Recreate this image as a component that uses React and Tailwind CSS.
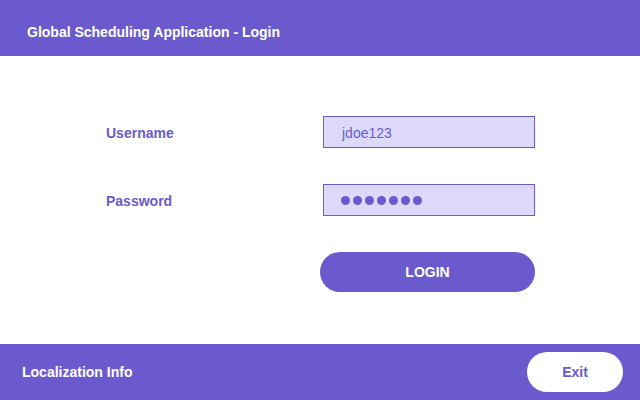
export default function App() {
  const dots = [0, 1, 2, 3, 4, 5, 6];

  return (
    <div className="w-[640px] h-[400px] flex flex-col bg-white font-['Liberation_Sans',Arial,sans-serif]">
      {/* Header */}
      <div className="h-14 shrink-0 bg-[#6a5acd] flex items-center pl-[27px] pt-2">
        <h1 className="text-white text-[14px] font-bold">Global Scheduling Application - Login</h1>
      </div>

      {/* Login form */}
      <div className="flex-1 pt-[60px] pl-[106px]">
        <div className="flex items-center h-8">
          <label className="w-[217px] pt-0.5 text-[14px] font-bold text-[#6a5acd]">Username</label>
          <div className="w-[212px] h-8 border border-[#6a5acd] bg-[#dcdaf8] flex items-center pl-[18px] pt-0.5 text-[14px] text-[#6a5acd]">
            jdoe123
          </div>
        </div>

        <div className="flex items-center h-8 mt-9">
          <label className="w-[217px] pt-0.5 text-[14px] font-bold text-[#6a5acd]">Password</label>
          <div className="w-[212px] h-8 border border-[#6a5acd] bg-[#dcdaf8] flex items-center pl-[17px] gap-[3px]">
            {dots.map(i => (
              <span key={i} className="w-[9px] h-[9px] rounded-full bg-[#6a5acd]" />
            ))}
          </div>
        </div>

        <button className="mt-9 ml-[214px] w-[215px] h-10 rounded-full bg-[#6a5acd] text-white text-[14px] font-bold">
          LOGIN
        </button>
      </div>

      {/* Footer */}
      <div className="h-14 shrink-0 bg-[#6a5acd] flex items-center justify-between pl-[22px] pr-[17px]">
        <span className="text-white text-[14px] font-bold">Localization Info</span>
        <button className="w-24 h-10 rounded-full bg-white text-[#6a5acd] text-[14px] font-bold">Exit</button>
      </div>
    </div>
  );
}
